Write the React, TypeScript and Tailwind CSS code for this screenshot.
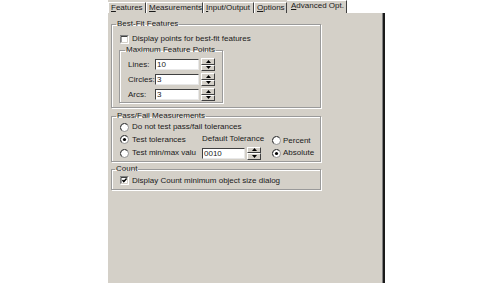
import type { ReactNode } from "react";

const tabs = [
  { key: "F", rest: "eatures", w: "w-[38px]" },
  { key: "M", rest: "easurements", w: "w-[57px]" },
  { key: "I", rest: "nput/Output", w: "w-[51px]" },
  { key: "O", rest: "ptions", w: "w-[33px]" },
];

function Checkbox({ checked }: { checked?: boolean }) {
  return (
    <svg width="9" height="9" viewBox="0 0 9 9" className="shrink-0">
      <rect x="0" y="0" width="9" height="9" fill="#ffffff" />
      <path d="M0 8.5V0.5H8.5" stroke="#808080" fill="none" />
      <path d="M1 7.5V1.5H7.5" stroke="#404040" fill="none" />
      <path d="M1.5 8.5H8.5V1" stroke="#ffffff" fill="none" />
      <path d="M1.5 7.5H7.5V2" stroke="#d4d0c8" fill="none" />
      {checked && <path d="M2.5 4 L3.8 5.6 L6.6 2.6" stroke="#000" strokeWidth="1.4" fill="none" />}
    </svg>
  );
}

function Radio({ checked }: { checked?: boolean }) {
  return (
    <svg width="9" height="9" viewBox="0 0 9 9" className="shrink-0">
      <circle cx="4.5" cy="4.5" r="4" fill="#ffffff" stroke="#909090" />
      <path d="M1.6 7.4 A4 4 0 0 1 7.4 1.6" stroke="#404040" fill="none" />
      {checked && <circle cx="4.5" cy="4.5" r="1.6" fill="#000" />}
    </svg>
  );
}

function Spinner() {
  return (
    <div className="flex h-[13px] w-[14px] shrink-0 flex-col bg-[#d4d0c8]">
      <div className="flex flex-1 items-center justify-center border-t border-l border-t-white border-l-white border-b border-r border-b-[#404040] border-r-[#404040]">
        <svg width="5" height="3" viewBox="0 0 5 3">
          <polygon points="0,3 2.5,0 5,3" fill="#000" />
        </svg>
      </div>
      <div className="flex flex-1 items-center justify-center border-t border-l border-t-white border-l-white border-b border-r border-b-[#404040] border-r-[#404040]">
        <svg width="5" height="3" viewBox="0 0 5 3">
          <polygon points="0,0 5,0 2.5,3" fill="#000" />
        </svg>
      </div>
    </div>
  );
}

function NumberField({ value, w }: { value: string; w: string }) {
  return (
    <div className="flex items-center gap-[2px]">
      <div
        className={`${w} h-[11px] border-t border-l border-t-[#404040] border-l-[#404040] border-b border-r border-b-[#e8e8e8] border-r-[#e8e8e8] bg-white pl-[1px] leading-[9px]`}
      >
        {value}
      </div>
      <Spinner />
    </div>
  );
}

function Group({
  title,
  legendOffset,
  className,
  children,
}: {
  title: string;
  legendOffset: string;
  className: string;
  children: ReactNode;
}) {
  return (
    <fieldset
      className={`${className} m-0 border border-[#9a9a9a] p-0 shadow-[1px_1px_0_#ffffff,inset_1px_1px_0_#ffffff]`}
    >
      <legend className={`${legendOffset} px-[1px] leading-[10px]`}>{title}</legend>
      {children}
    </fieldset>
  );
}

function SpinRow({ label, value }: { label: string; value: string }) {
  return (
    <div className="flex h-[13px] items-center">
      <span className="w-[27px] shrink-0 whitespace-nowrap">{label}</span>
      <NumberField value={value} w="w-[44px]" />
    </div>
  );
}

export default function App() {
  return (
    <div className="flex h-[283px] w-[494px] bg-white font-['Liberation_Sans',Arial,sans-serif] text-[8px] leading-[10px] text-[#1a1a1a]">
      <div className="w-[107px] shrink-0" />

      <div className="flex w-[278px] flex-col">
        <div className="flex h-[13px] items-end bg-white pl-[1px]">
          <div className="flex h-[13px] items-end bg-[#d4d0c8]">
            {tabs.map((t) => (
              <div
                key={t.key}
                className={`${t.w} flex h-[11px] items-center border-t border-t-white border-r border-r-[#404040] border-l border-l-white pl-[2px]`}
              >
                <span>
                  <span className="underline underline-offset-1">{t.key}</span>
                  {t.rest}
                </span>
              </div>
            ))}
          </div>
          <div className="flex h-[13px] w-[60px] items-center border-r border-r-[#404040] border-t border-t-white bg-[#d4d0c8] pb-[2px] pl-[4px]">
            <span>
              <span className="underline underline-offset-1">A</span>dvanced Opt.
            </span>
          </div>
        </div>

        <div className="flex flex-1 flex-col border-l border-l-white border-r-2 border-r-[#1a1a1a] bg-[#d4d0c8] pl-[3px] pt-[6px] shadow-[inset_-1px_0_0_#808080]">
          <Group title="Best-Fit Features" legendOffset="ml-[4px]" className="w-[210px]">
            <div className="pb-[4px] pl-[7px] pt-[4px]">
              <div className="flex h-[12px] items-center gap-[3px] pl-[1px]">
                <Checkbox />
                <span>Display points for best-fit features</span>
              </div>
              <Group title="Maximum Feature Points" legendOffset="ml-[5px]" className="w-[104px]">
                <div className="flex flex-col gap-[2px] pb-[1px] pl-[8px] pt-[3px]">
                  <SpinRow label="Lines:" value="10" />
                  <SpinRow label="Circles:" value="3" />
                  <SpinRow label="Arcs:" value="3" />
                </div>
              </Group>
            </div>
          </Group>

          <Group title="Pass/Fail Measurements" legendOffset="ml-[4px]" className="mt-[3px] w-[210px]">
            <div className="grid grid-cols-[82px_70px_1fr] pb-[1px] pl-[8px]">
              <div className="col-span-3 flex h-[12px] items-center gap-[3px]">
                <Radio />
                <span>Do not test pass/fail tolerances</span>
              </div>

              <div className="flex h-[13px] items-center gap-[3px]">
                <Radio checked />
                <span>Test tolerances</span>
              </div>
              <div className="flex h-[13px] items-center pb-[2px]">Default Tolerance</div>
              <div className="flex h-[13px] items-center gap-[2px] pt-[2px]">
                <Radio />
                <span>Percent</span>
              </div>

              <div className="flex h-[14px] items-center gap-[3px]">
                <Radio />
                <span className="whitespace-nowrap">Test min/max valu</span>
              </div>
              <div className="flex h-[14px] items-center">
                <NumberField value="0010" w="w-[43px]" />
              </div>
              <div className="flex h-[14px] items-center gap-[2px]">
                <Radio checked />
                <span>Absolute</span>
              </div>
            </div>
          </Group>

          <Group title="Count" legendOffset="ml-[3px]" className="mt-[2px] w-[210px]">
            <div className="flex h-[13px] items-center gap-[3px] pl-[8px]">
              <Checkbox checked />
              <span>Display Count minimum object size dialog</span>
            </div>
            <div className="h-[2px]" />
          </Group>
        </div>
      </div>
    </div>
  );
}
